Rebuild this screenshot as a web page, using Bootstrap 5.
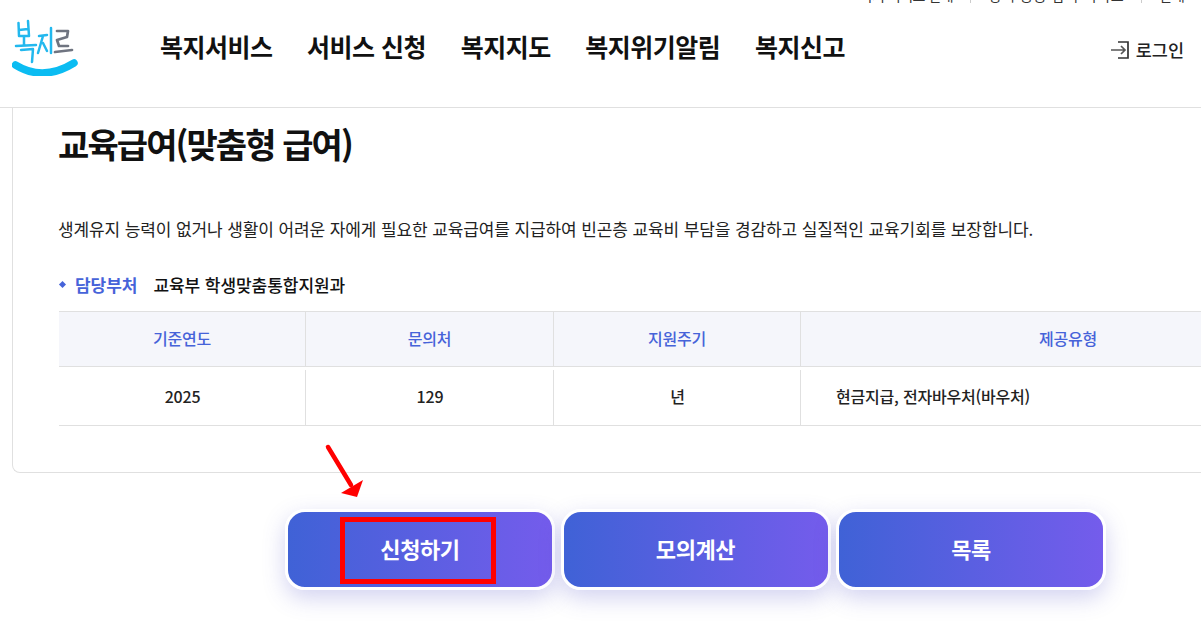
<!DOCTYPE html>
<html lang="ko"><head><meta charset="utf-8"><title>교육급여</title>
<link href="https://cdn.jsdelivr.net/npm/bootstrap@5.3.0/dist/css/bootstrap.min.css" rel="stylesheet">
<style>
html,body{height:637px;overflow:hidden}
body{font-family:"Noto Sans CJK KR","Noto Sans",sans-serif;color:#111;background:#fff}
.pg{width:1201px;height:637px;overflow:hidden;position:relative}
.top-clip{height:3px;overflow:hidden;display:flex;justify-content:flex-end;align-items:flex-start;gap:17px;padding-right:16px;font-size:14px;line-height:14px;color:#333}
.top-clip span{margin-top:-12px}
.top-clip span:nth-child(1){letter-spacing:-.5px}
.top-clip span:nth-child(3){letter-spacing:.7px}
.top-clip i{width:1px;height:3px;background:#ccc}
.hdr{height:105px;border-bottom:1px solid #e0e0e0;padding-left:12px}
.logo{width:66px;height:60px;margin-top:13px;flex:none}
.mainnav{margin-left:82px;margin-top:20px;gap:34.6px;font-size:25px;line-height:46px;font-weight:700;letter-spacing:-.5px;color:#111}
.login{margin-left:auto;margin-top:35px;margin-right:17px;font-size:17.5px;line-height:24px;gap:7px;color:#222;font-weight:500}
.panel{margin:0 0 0 12px;height:365px;border:1px solid #e0e0e0;border-top:0;border-right:0;border-radius:0 0 0 8px;padding:13px 0 0 46px}
.ttl{font-size:34px;font-weight:700;line-height:46px;letter-spacing:-1.9px;margin:0 0 0 -1px;color:#111}
.dsc{font-size:17px;line-height:28px;margin:48px 0 0 -1px;letter-spacing:-.11px;color:#222}
.dept{margin:28px 0 0;font-size:17px;line-height:28px;font-weight:500;letter-spacing:-.05px}
.dept .lbl{color:#4663d9;font-weight:600;margin-right:16px;position:relative;padding-left:16px}
.dept .lbl::before{content:"";position:absolute;left:1px;top:10px;width:5px;height:5px;background:#4663d9;transform:rotate(45deg)}
.tblgrid{width:1276px;margin-top:12px;border-top:1px solid #e0e0e0;display:grid;grid-template-columns:247px 248px 247px 534px}
.tblgrid>div{text-align:center;font-size:16px;font-weight:500;letter-spacing:-.2px}
.hc{height:55px;line-height:52px;background:#f5f6fb;color:#4663d9;border-bottom:1px solid #e0e0e0;border-right:1px solid #e0e0e0}
.hc:nth-child(4){border-right:0}
.bc{height:59px;line-height:58px;border-bottom:1px solid #e0e0e0;position:relative;color:#222}
.bc:not(.lastc)::after{content:"";position:absolute;right:0;top:3px;bottom:0;width:1px;background:#e0e0e0}
.tblgrid>.lastc{text-align:left;padding-left:35px}
.btns{gap:5.5px;margin:36px 0 0 285px}
.gbtn{width:270px;height:81px;border:3px solid #fff;border-radius:20px;background:linear-gradient(90deg,#3f62d6,#755cec);background-origin:border-box;color:#fff;font-size:22px;font-weight:700;letter-spacing:-.4px;box-shadow:0 8px 22px rgba(80,80,200,.25);padding:0 0 3px}
.hl{position:absolute;left:340px;top:517px;width:156px;height:67px;border:5px solid #f00}
.arr{position:absolute;left:322px;top:443px;width:46px;height:58px}
</style></head><body>
<div class="pg">
<div class="top-clip"><span>복지 서비스 안내</span><i></i><span>정책 공공 참여 서비스</span><i></i><span>안내</span></div>
<header class="hdr d-flex">
<svg class="logo" viewBox="12 13 66 60" fill="none" stroke-linecap="round" stroke-linejoin="round">
<g stroke="#22b8ee" stroke-width="2.5"><path d="M18.5 20L19 33M28 18L29 33M19 27L28 26M19 33L29 33M24 34V42M16 43L36 42M21 47L33 46L32 59"/><path d="M39 33L47 32M43 33L38 50M43 40L47 48M51 25V50"/></g>
<path d="M57 28H68L67 34L57 37L59 43H68M55 49L72 47" stroke="#6f7480" stroke-width="2.7"/>
<path d="M15.5 62Q43 79 74 60" stroke="#0bbcf2" stroke-width="7.5"/>
</svg>
<nav class="mainnav d-flex"><span>복지서비스</span><span>서비스 신청</span><span>복지지도</span><span>복지위기알림</span><span>복지신고</span></nav>
<div class="login d-flex align-items-center align-self-start">
<svg width="18" height="18" viewBox="0 0 18 18" fill="none"><path d="M7 1h10v16H7" stroke="#333" stroke-width="1.7"/><path d="M0 9h14M10 5l4 4-4 4" stroke="#555" stroke-width="1.7"/></svg>
<span>로그인</span></div>
</header>
<main>
<section class="panel">
<h1 class="ttl">교육급여(맞춤형 급여)</h1>
<p class="dsc">생계유지 능력이 없거나 생활이 어려운 자에게 필요한 교육급여를 지급하여 빈곤층 교육비 부담을 경감하고 실질적인 교육기회를 보장합니다.</p>
<p class="dept"><span class="lbl">담당부처</span><span>교육부 학생맞춤통합지원과</span></p>
<div class="tblgrid">
<div class="hc">기준연도</div><div class="hc">문의처</div><div class="hc">지원주기</div><div class="hc">제공유형</div>
<div class="bc">2025</div><div class="bc">129</div><div class="bc">년</div><div class="bc lastc">현금지급, 전자바우처(바우처)</div>
</div>
</section>
<div class="btns d-flex">
<button class="btn gbtn" type="button">신청하기</button><button class="btn gbtn" type="button">모의계산</button><button class="btn gbtn" type="button">목록</button>
</div>
</main>
<div class="hl"></div>
<svg class="arr" viewBox="0 0 46 58"><path d="M6 4L29 42" stroke="#f00" stroke-width="4.5" stroke-linecap="round"/><path d="M19 50L41 37L35 54Z" fill="#f00"/></svg>
</div>
</body></html>
